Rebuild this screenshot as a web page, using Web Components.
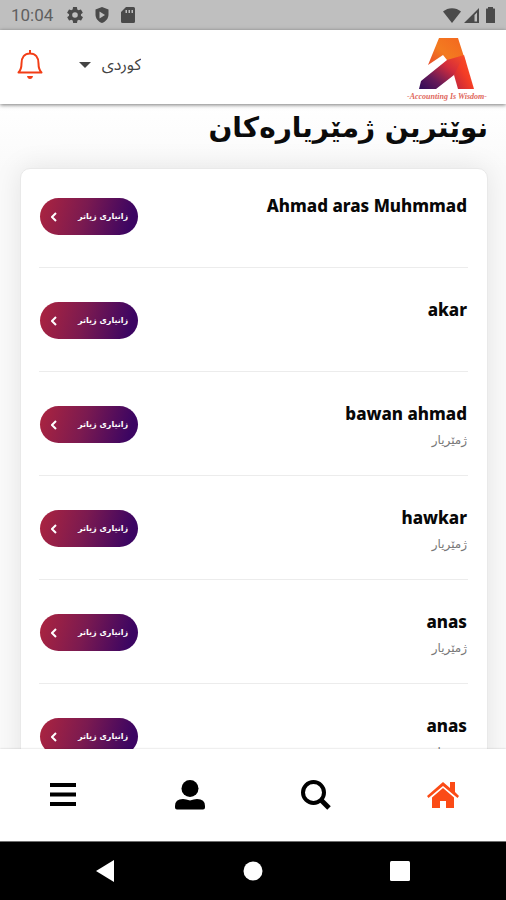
<!DOCTYPE html>
<html lang="ckb" dir="rtl">
<head>
<meta charset="utf-8">
<meta name="viewport" content="width=device-width, initial-scale=1">
<title>نوێترین ژمێریارەکان</title>
<style>
  html, body { height: 100%; margin: 0; }
  body { font-family: "Noto Sans", "DejaVu Sans", sans-serif; color: #0b0b0b; background: #fff; }
</style>
</head>
<body>
<accounting-app></accounting-app>
<script>
const define = (name, html, setup) => {
  const template = document.createElement('template');
  template.innerHTML = html;
  customElements.define(name, class extends HTMLElement {
    constructor() {
      super();
      this.attachShadow({ mode: 'open' }).append(template.content.cloneNode(true));
    }
    connectedCallback() { if (setup) setup(this, this.shadowRoot); }
  });
};

define('status-bar', `
<style>
  :host { display: flex; direction: ltr; align-items: center; justify-content: space-between; height: 30px; padding: 0 8px 0 11px; background: #bfbfbf; color: #606060; font: 17px/30px Roboto, sans-serif; box-sizing: border-box; flex: none; }
  div { display: flex; align-items: center; }
  .left { gap: 11px; } .left span { margin-right: 3px; }
  .right { gap: 3px; }
  svg { display: block; fill: #4a4a4a; }
</style>
<div class="left"><span>10:04</span>
  <svg width="16" height="16" viewBox="2 2 20 20"><path fill-rule="evenodd" d="M19.4 13a7.800 7.800 0 0 0 0-2l2.100-1.600a.5.5 0 0 0 .1-.6l-2-3.500a.5.5 0 0 0-.6-.2l-2.500 1a7.300 7.300 0 0 0-1.700-1L14.500 2.400A.5.5 0 0 0 14 2h-4a.5.5 0 0 0-.5.4l-.4 2.700a7.300 7.300 0 0 0-1.700 1l-2.500-1a.5.5 0 0 0-.6.2l-2 3.500a.5.5 0 0 0 .1.600L4.600 11a7.800 7.800 0 0 0 0 2l-2.100 1.600a.5.5 0 0 0-.1.600l2 3.500c.1.200.4.300.6.200l2.500-1a7.300 7.300 0 0 0 1.700 1l.4 2.700c0 .2.200.4.5.4h4c.300 0 .5-.2.5-.4l.4-2.700a7.300 7.300 0 0 0 1.700-1l2.500 1c.2.100.5 0 .6-.2l2-3.500a.5.5 0 0 0-.1-.6zM12 15.500a3.500 3.500 0 1 1 0-7 3.500 3.500 0 0 1 0 7z"/></svg>
  <svg width="16" height="16" viewBox="0 0 16 16"><path fill-rule="evenodd" d="M8 0l6.500 2.500V7.500c0 4-2.800 7.300-6.500 8.500-3.700-1.200-6.500-4.500-6.500-8.500v-5zM5.500 4.500v7L11 8z"/></svg>
  <svg width="14" height="16" viewBox="0 0 14 16"><path fill-rule="evenodd" d="M5 0h7.500Q14 0 14 1.500v13q0 1.500-1.500 1.500h-11Q0 16 0 14.500V5zM4.500 3v3H6V3zm3 0v3H9V3zm3 0v3H12V3z"/></svg>
</div>
<div class="right">
  <svg width="18" height="15" viewBox="0 0 18 15"><path d="M9 15L0 3.500C5-1 13-1 18 3.500z"/></svg>
  <svg width="16" height="15" viewBox="0 0 16 15"><path fill-rule="evenodd" d="M0 15L15 0v15zM10.500 7v6.500h2.500V4.500z"/></svg>
  <svg width="15" height="16" viewBox="0 0 15 16"><path d="M5 1.500V0h5v1.500h1.500q.5 0 .5.500v13.500q0 .5-.5.500h-8q-.5 0-.5-.5V2q0-.5.5-.5z"/></svg>
</div>`);

define('brand-logo', `
<style>
  :host { display: flex; flex-direction: column; align-items: center; gap: 3px; width: 82px; }
  svg { display: block; }
  span { direction: ltr; font: italic bold 8px/10px "Liberation Serif", serif; color: #e0675b; white-space: nowrap; }
</style>
<svg width="56" height="51" viewBox="0 0 56 51" role="img" aria-label="A">
  <defs>
    <linearGradient id="a" x1="0" y1="1" x2="1" y2="0"><stop offset="0" stop-color="#e33b2d"/><stop offset=".5" stop-color="#f37b20"/><stop offset="1" stop-color="#f4651f"/></linearGradient>
    <linearGradient id="b" x1="0" y1="1" x2="1" y2="0"><stop offset="0" stop-color="#2e0b58"/><stop offset=".3" stop-color="#641a58"/><stop offset=".65" stop-color="#d32c3b"/><stop offset="1" stop-color="#fa4e24"/></linearGradient>
    <linearGradient id="c" x1="0" y1="1" x2="1" y2="0"><stop offset="0" stop-color="#bd2440"/><stop offset=".5" stop-color="#f43d25"/><stop offset="1" stop-color="#f9552c"/></linearGradient>
  </defs>
  <path fill="url(#a)" d="M20 0h19l8 25-12 11-7-14-4-5-15 10z"/>
  <path fill="url(#b)" d="M0 51l2-8 26-21 17-5-6 18-4 2-18 14z"/>
  <path fill="url(#c)" d="M45 17l10 34H39l-4-14z"/>
</svg>
<span>-Accounting Is Wisdom-</span>`);

define('app-header', `
<style>
  :host { display: flex; direction: ltr; align-items: center; height: 74px; padding: 0 18px 0 17px; box-sizing: border-box; background: #fff; box-shadow: 0 1px 4px #0008; z-index: 2; flex: none; }
  button { border: 0; padding: 0 0 4px; background: none; }
  svg { display: block; }
  label { display: flex; align-items: center; gap: 10px; margin-left: 36px; padding-bottom: 4px; }
  select { appearance: none; direction: rtl; border: 0; padding: 0; background: none; color: #444; font: 16px/28px "Noto Sans Arabic", "DejaVu Sans", sans-serif; }
  brand-logo { margin-left: auto; margin-top: 6px; }
</style>
<button aria-label="ئاگادارکردنەوەکان"><svg width="26" height="30" viewBox="0 0 25 30" fill="none" stroke="#f23d16" stroke-width="2"><path d="M12.500 0v3M1 22.500c2.500-2.500 3-5 3-9 0-6 3-10 8.500-10s8.500 4 8.500 10c0 4 .5 6.500 3 9z" stroke-linejoin="round"/><path fill="#f23d16" stroke="none" d="M9.500 26h6q-.5 3-3 3t-3-3z"/></svg></button>
<label><svg width="12" height="6" viewBox="0 0 12 6"><path fill="#444" d="M0 0h12L6 6z"/></svg>
<select aria-label="زمان"><option>كوردی</option></select></label>
<brand-logo></brand-logo>`);

define('more-button', `
<style>
  :host { display: block; flex: none; }
  button { display: flex; direction: ltr; align-items: center; justify-content: space-between; width: 98px; height: 37px; border: 0; border-radius: 19px; padding: 0 10px 0 11px; color: #fff; background: linear-gradient(105deg, #a72341 5%, #7b1a50 45%, #3c0562 90%); font: bold 8px/20px "DejaVu Sans", sans-serif; white-space: nowrap; }
  svg { display: block; }
</style>
<button><svg width="6" height="10" viewBox="0 0 6 10" fill="none" stroke="#fff" stroke-width="2"><path d="M5 1L1 5l4 4"/></svg><span dir="rtl"><slot></slot></span></button>`);

define('accountant-row', `
<style>
  :host { display: flex; align-items: flex-start; justify-content: space-between; height: 104px; padding: 34px 1px 0; box-sizing: border-box; border-bottom: 1px solid #ececec; }
  :host([first]) { height: 99px; padding-top: 29px; }
  h2 { margin: 0; direction: ltr; font: 800 17px/16px "Noto Sans", sans-serif; color: #080808; }
  p { margin: 0; font: 12px/36px "DejaVu Sans", sans-serif; color: #777; }
</style>
<div><h2><slot></slot></h2><p></p></div><more-button>زانیاری زیاتر</more-button>`,
(host, root) => { root.querySelector('p').textContent = host.getAttribute('role-name') || ''; });

define('accountant-list', `
<style>
  :host { display: block; margin: 0 18px 0 20px; padding: 0 19px 0 18px; background: #fff; border: 1px solid #e9e9e9; border-radius: 10px; box-shadow: 0 0 28px #00000018; box-sizing: border-box; }
</style><slot></slot>`);

define('tab-bar', `
<style>
  :host { display: block; flex: none; background: #fff; box-shadow: 0 0 2px #0003; z-index: 2; }
  nav { display: grid; direction: ltr; grid-template-columns: repeat(4, 1fr); height: 92px; }
  a { display: grid; place-items: center; color: #000; }
  svg { display: block; fill: currentColor; }
  .active { color: #fb4b16; }
</style>
<nav>
  <a href="#menu" aria-label="مێنیو"><svg width="26" height="24" viewBox="0 0 26 24"><path d="M0 0h26v4H0zM0 9.500h26v4H0zM0 19h26v4H0z"/></svg></a>
  <a href="#profile" aria-label="پرۆفایل"><svg width="30" height="30" viewBox="0 0 30 30"><circle cx="15" cy="8.500" r="8.500"/><path d="M8 19q3 0 7 1.500Q19 19 22 19q8 0 8 7v1.500q0 2-2 2H2q-2 0-2-2V26q0-7 8-7z"/></svg></a>
  <a href="#search" aria-label="گەڕان"><svg width="30" height="30" viewBox="0 0 30 30" fill="none"><circle cx="12.500" cy="12.500" r="10.500" fill="none" stroke="#000" stroke-width="4"/><path d="M20 20l8 8" stroke="#000" stroke-width="5"/></svg></a>
  <a href="#home" class="active" aria-label="سەرەکی"><svg width="32" height="26" viewBox="0 0 32 26"><path d="M16 0l7 6V0h5v10l4 4-1.500 2L16 4 1.500 16 0 14z"/><path d="M16 6l11 9.500V26h-8v-7h-6v7H5V15.500z"/></svg></a>
</nav>`);

define('system-nav', `
<style>
  :host { display: block; flex: none; background: #000; border-top: 1px solid #777; }
  div { display: grid; direction: ltr; grid-template-columns: repeat(3, 1fr); place-items: center; height: 58px; padding: 0 33px; }
  button { border: 0; padding: 0; background: none; width: 20px; }
  svg { display: block; fill: #fff; }
</style>
<div>
  <button aria-label="Back"><svg width="20" height="22" viewBox="0 0 20 22"><path d="M0 11L18 0v22z"/></svg></button>
  <button aria-label="Home"><svg width="20" height="20" viewBox="0 0 20 20"><circle cx="10" cy="10" r="9.500"/></svg></button>
  <button aria-label="Recent"><svg width="20" height="20" viewBox="0 0 20 20"><rect width="20" height="20" rx="1.500"/></svg></button>
</div>`);

define('accounting-app', `
<style>
  :host { display: flex; flex-direction: column; height: 100vh; overflow: hidden; }
  main { flex: 1; min-height: 0; overflow: hidden; background: linear-gradient(#fff, #fafafa 64px); }
  h1 { margin: 0; padding: 0 18px; height: 64px; font: bold 28px/48px "DejaVu Sans", sans-serif; color: #0b0b0b; box-sizing: border-box; white-space: nowrap; }
</style>
<status-bar></status-bar>
<app-header></app-header>
<main>
  <h1>نوێترین ژمێریارەکان</h1>
  <accountant-list>
    <accountant-row first>Ahmad aras Muhmmad</accountant-row>
    <accountant-row>akar</accountant-row>
    <accountant-row role-name="ژمێریار">bawan ahmad</accountant-row>
    <accountant-row role-name="ژمێریار">hawkar</accountant-row>
    <accountant-row role-name="ژمێریار">anas</accountant-row>
    <accountant-row role-name="ژمێریار">anas</accountant-row>
  </accountant-list>
</main>
<tab-bar></tab-bar>
<system-nav></system-nav>`);
</script>
</body>
</html>
